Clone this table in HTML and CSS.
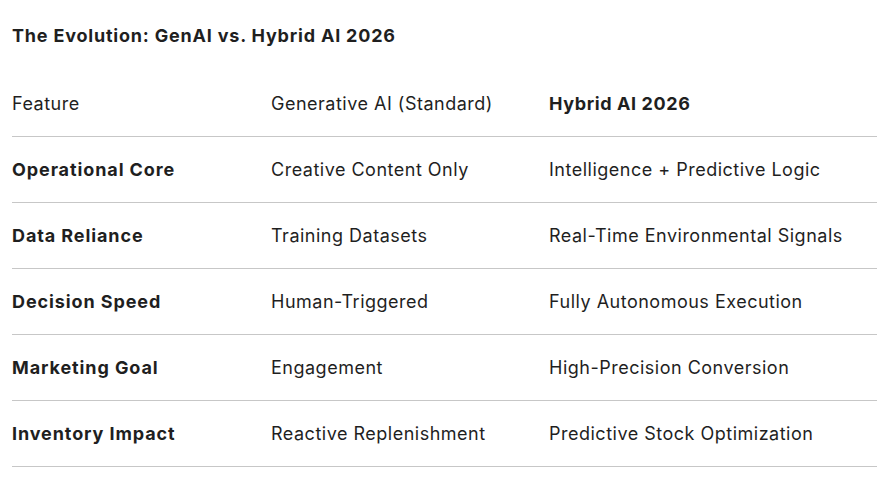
FILE: index.html
```html
<!DOCTYPE html>
<html>
<head>
<meta charset="utf-8">
<link rel="stylesheet" href="styles.css">
</head>
<body>
<div class="page">
  <h2 class="title">The Evolution: GenAI vs. Hybrid AI 2026</h2>
  <table class="cmp">
    <thead>
      <tr><th class="c1">Feature</th><th class="c2">Generative AI (Standard)</th><th class="c3">Hybrid AI 2026</th></tr>
    </thead>
    <tbody>
      <tr><td class="c1">Operational Core</td><td>Creative Content Only</td><td>Intelligence + Predictive Logic</td></tr>
      <tr><td class="c1">Data Reliance</td><td>Training Datasets</td><td>Real-Time Environmental Signals</td></tr>
      <tr><td class="c1">Decision Speed</td><td>Human-Triggered</td><td>Fully Autonomous Execution</td></tr>
      <tr><td class="c1">Marketing Goal</td><td>Engagement</td><td>High-Precision Conversion</td></tr>
      <tr><td class="c1">Inventory Impact</td><td>Reactive Replenishment</td><td>Predictive Stock Optimization</td></tr>
    </tbody>
  </table>
</div>
</body>
</html>
```
FILE: styles.css
```css
html, body { margin: 0; padding: 0; background: #fff; }
body { font-family: Inter, "Open Sans", sans-serif; color: #1f1f1f; }
.page { padding: 0 14px 0 12px; }
.title { margin: 0; height: 71px; line-height: 72px; font-size: 18px; font-weight: 700; letter-spacing: 0.8px; }
.cmp { width: 865px; border-collapse: collapse; table-layout: fixed; font-size: 18px; letter-spacing: 0.5px; }
.cmp th, .cmp td { text-align: left; padding: 0; height: 65px; border-bottom: 1px solid #c7c7c7; vertical-align: middle; font-weight: 400; }
.cmp th.c1 { width: 259px; }
.cmp th.c2 { width: 278px; }
.cmp th.c3 { font-weight: 700; letter-spacing: 0.6px; }
.cmp td.c1 { font-weight: 700; letter-spacing: 0.9px; }
```
